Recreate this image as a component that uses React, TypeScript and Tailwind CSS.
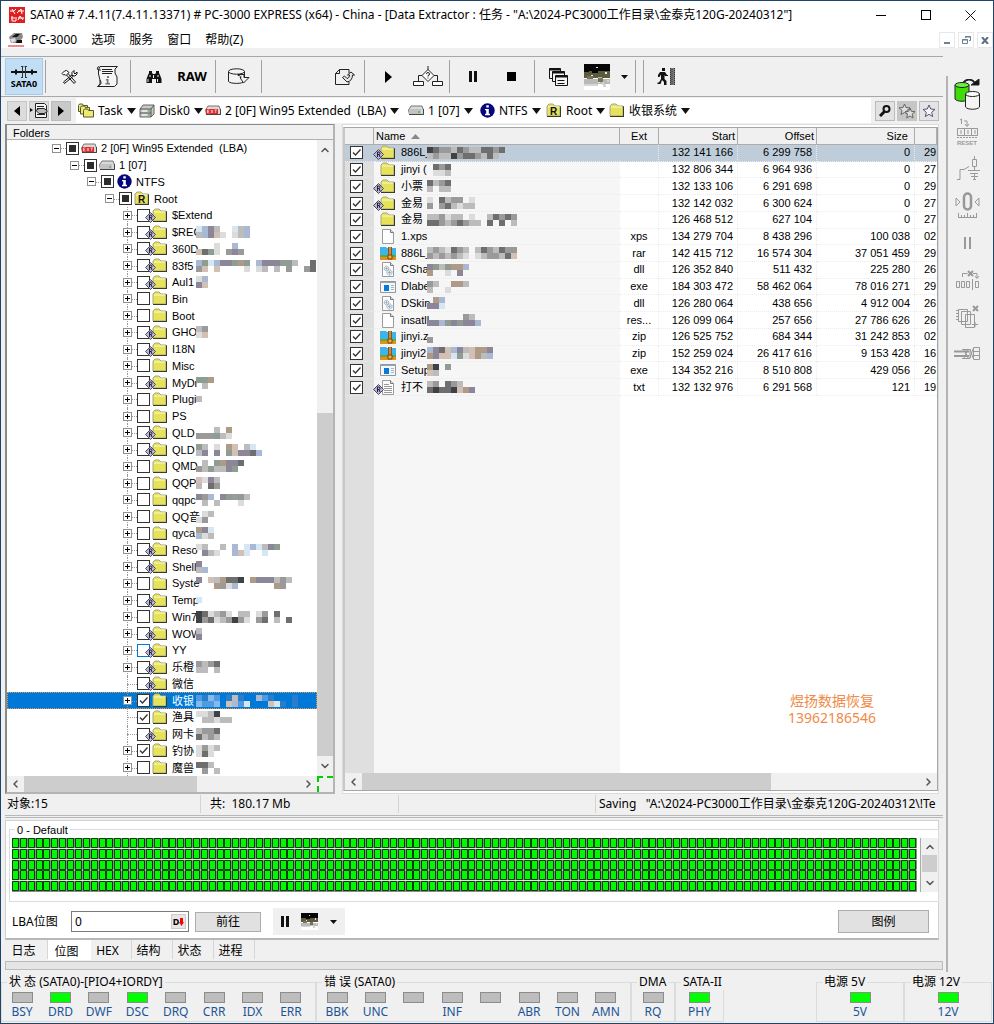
import React from "react";
import { ChevronDown, ChevronLeft, ChevronRight, ChevronUp } from "lucide-react";

const PALETTE: Record<string, string> = {
  a: "#dcdcdc", b: "#bcbcbc", c: "#9a9a9a", d: "#6e6e6e", e: "#3f4244",
  f: "#a9b9d3", g: "#d2c0b5", h: "#d6e6f2", i: "#8b8798", j: "#8f9c92",
  k: "#ae9b87", p: "#4f9be2", q: "#2a7dcc", r: "#86b9ec",
};

function Mosaic({ rows }: { rows: string[] }) {
  const cols = Math.max(...rows.map((r) => r.length));
  return (
    <svg width={cols * 6} height={rows.length * 6} shapeRendering="crispEdges" className="relative shrink-0" aria-hidden="true">
      {rows.flatMap((row, y) =>
        row.split("").map((ch, x) =>
          PALETTE[ch] ? <rect key={x + "-" + y} x={x * 6} y={y * 6} width="6" height="6" fill={PALETTE[ch]} /> : null,
        ),
      )}
    </svg>
  );
}

/* ---------- small icons ---------- */

function FolderIcon({ letter }: { letter?: string }) {
  return (
    <svg width="16" height="15" viewBox="0 0 16 15" className="shrink-0">
      <path d="M2 3h13v11H2z" fill="#222" />
      <path d="M1 3 3 1h4l2 2h5v10H1z" fill="#e6e25a" stroke="#a5a58c" />
      <path d="M2 4h11" stroke="#fbfbc8" />
      <path d="M1 13.5h14M14.5 4v10" stroke="#3b3b22" fill="none" />
      {letter && (
        <text x="4" y="12" fontSize="10" fontWeight="700" fontFamily="Liberation Sans, sans-serif" fill="#111">{letter}</text>
      )}
    </svg>
  );
}

function MarkBadge() {
  return (
    <svg width="11" height="11" viewBox="0 0 11 11" className="absolute top-1 -left-[7px]">
      <path d="M5.500.5 10.500 5.500 5.500 10.500.5 5.500z" fill="#b9b5dc" stroke="#4c4a66" />
      <path d="M4.500 8V3h1.500q1 .2 1 1.300T6 5.500H4.500M6 5.500 7 8" fill="none" stroke="#222" />
    </svg>
  );
}

function DriveIcon({ ext }: { ext?: boolean }) {
  return (
    <svg width="16" height="11" viewBox="0 0 16 11" className="shrink-0">
      <path d="M3 1h11l1.500 4v4.500h-14L.5 5z" fill="#d9d9d9" stroke="#777" />
      <path d="M1 4h12v5H1z" fill={ext ? "#e02a2a" : "#c2c2c2"} />
      <path d="M1 9.500h14.500V4" fill="none" stroke="#444" />
      {ext ? (
        <path d="M4.500 5H2.500v3h2M2.500 6.500h1.500M6 5l2 3M8 5 6 8M9.500 5h2.500M10.700 5v3" stroke="#fff" strokeWidth=".6" fill="none" />
      ) : (
        <path d="M10 7h2" stroke="#3a3" />
      )}
    </svg>
  );
}

function DiskIcon() {
  return (
    <svg width="16" height="14" viewBox="0 0 16 14" className="shrink-0">
      <path d="M4 1h11v9l-3 3H1V5z" fill="#c9c9c9" stroke="#666" />
      <path d="M1 5h11v8M12 5l3-4M1 9h11" fill="none" stroke="#555" />
      <path d="M3 7h5M3 11h5" stroke="#fff" />
      <path d="M9 7h2M9 11h2" stroke="#2b2" />
    </svg>
  );
}

function InfoIcon() {
  return (
    <svg width="15" height="15" viewBox="0 0 15 15" className="shrink-0">
      <circle cx="7.500" cy="7.500" r="7.200" fill="#05057c" />
      <path d="M6.300 2.300h2.500v2.200H6.300zM5 6h3.800v4.700H10v1.500H5v-1.500h1.200V7.300H5z" fill="#fff" />
    </svg>
  );
}

function StackFolders() {
  return (
    <svg width="16" height="15" viewBox="0 0 16 15" className="shrink-0" fill="#eeea70" stroke="#555533">
      <path d="M.5 8.500V2.500l1-1.500h3l1 1.500h4v6z" />
      <path d="M2.500 11V4.500l1-1.500h3l1 1.500h4V11z" />
      <path d="M5.500 14V7.500l1-1.500h3l1 1.500h5V14z" />
    </svg>
  );
}

function FileIcon({ kind }: { kind: string }) {
  if (kind === "zip")
    return (
      <svg width="16" height="14" viewBox="0 0 16 14" className="shrink-0">
        <path d="M0 1h6l1 1h9v9H0z" fill="#3fb4ec" />
        <path d="M0 9h16v2H0z" fill="#57b030" />
        <path d="M0 11h16v3H0z" fill="#ef8a1c" />
        <path d="M8 1h4v12H8z" fill="#8a5424" />
        <path d="M9 2h2M9 4h2M9 6h2M9 8h2" stroke="#f3ca60" />
        <path d="M8 9h4v4H8z" fill="#f6b32c" stroke="#6d4319" />
      </svg>
    );
  if (kind === "exe")
    return (
      <svg width="16" height="12" viewBox="0 0 16 12" className="shrink-0">
        <path d="M.5.5h15v11H.5z" fill="#f4f6f8" stroke="#8c99a5" />
        <path d="M1 1.500h14" stroke="#9aa7b3" />
        <path d="M4 4h5v6H4z" fill="#0a78d6" />
        <path d="M11 4.500h3M11 6.500h3M11 8.500h3" stroke="#9bb6cf" />
      </svg>
    );
  return (
    <svg width="16" height="15" viewBox="0 0 16 15" className="shrink-0">
      <path d="M2.500.5h8l3 3v11h-11z" fill="#fdfdfd" stroke="#9b9b9b" />
      <path d="M10.500.5v3h3" fill="#ddd" stroke="#777" />
      {kind === "txt" && <path d="M4 4.500h5M4 6.500h8M4 8.500h8M4 10.500h8M4 12.500h8" stroke="#999" />}
      {kind === "dll" && (
        <g fill="#e8eef3" stroke="#83929f">
          <circle cx="6.500" cy="6.500" r="2.300" strokeDasharray="1 .6" />
          <circle cx="9.500" cy="10.500" r="2.600" stroke="#6fa3c7" strokeDasharray="1.200 .6" />
          <circle cx="6.500" cy="6.500" r=".6" />
          <circle cx="9.500" cy="10.500" r=".7" />
        </g>
      )}
    </svg>
  );
}

function Landscape({ small }: { small?: boolean }) {
  return (
    <svg width={small ? 17 : 26} height={small ? 17 : 26} viewBox="0 0 26 26" shapeRendering="crispEdges">
      <path d="M0 0h26v26H0z" fill="#fff" />
      <path d="M0 0h26v7H0z" fill="#060606" />
      <path d="M0 7h26v7H0z" fill="#5c5a3c" />
      <path d="M0 6h5v2H0zM8 7h6v2H8z" fill="#060606" />
      <path d="M0 15h3v-1h6v1h5v-2h4v2h8v5H0z" fill="#b9b9b6" />
      <path d="M14 14h5v4h-5zM3 12h6v3H3z" fill="#77745a" />
      <path d="M0 20h14v2H0zM18 18h2v2h2v3h-3v-2h-1zM23 16h2v2h-2z" fill="#d6d6d6" />
      <path d="M12 3h2v1h-2zM21 8h2v2h-2zM7 11h2v1H7zM14 18h2v1h-2z" fill="#e8e8e8" />
    </svg>
  );
}

function Caret({ small }: { small?: boolean }) {
  return (
    <svg width={small ? 7 : 9} height={small ? 4 : 6} viewBox="0 0 9 6" preserveAspectRatio="none" className="shrink-0">
      <path d="M0 0h9L4.500 6z" fill="#111" />
    </svg>
  );
}

/* ---------- controls ---------- */

function Tick({ state, label, tone = "normal" }: { state: "off" | "on" | "mixed"; label: string; tone?: "normal" | "hot" }) {
  return (
    <span className="relative flex h-[13px] w-[13px] shrink-0">
      <input
        type="checkbox"
        aria-label={label}
        defaultChecked={state === "on"}
        className={"h-[13px] w-[13px] appearance-none border bg-white " + (tone === "hot" ? "border-[#0078d7]" : "border-[#333]")}
      />
      {state === "on" && (
        <svg width="13" height="13" viewBox="0 0 13 13" className="pointer-events-none absolute inset-0">
          <path d="M3 6.500 5.500 9l5-5.500" fill="none" stroke="#333" strokeWidth="1.300" />
        </svg>
      )}
      {state === "mixed" && <span className="pointer-events-none absolute inset-[3px] bg-[#2d2d2d]" />}
    </span>
  );
}

function Sep() {
  return <span className="mx-[2px] my-[3px] w-px shrink-0 bg-[#a0a0a0]" />;
}

function Tool({ label, className, children }: { label: string; className: string; children: React.ReactNode }) {
  return (
    <button type="button" aria-label={label} className={"flex shrink-0 items-center justify-center " + className}>
      {children}
    </button>
  );
}

function Toolbar() {
  return (
    <div className="flex h-[41px] shrink-0 border-y border-[#a8a8a8] pl-1">
      <Tool label="SATA0" className="my-[1px] w-[38px] flex-col border border-[#a3cdf0] bg-[#c2def5]">
        <svg width="28" height="14" viewBox="0 0 28 14" fill="none" stroke="#111">
          <path d="M1 7h26" strokeWidth="2" />
          <path d="M6 4.500v5M22 4.500v5" strokeWidth="2" />
          <path d="M12.500 2v10M15.500 2v10M11 1.500h2.500M14.500 1.500H17M11 12.500h2M15 12.500h2" stroke="#333" />
        </svg>
        <span className="text-[9px] leading-[10px] font-bold">SATA0</span>
      </Tool>
      <Sep />
      <Tool label="工具" className="w-[42px]">
        <svg width="17" height="16" viewBox="0 0 17 16" fill="none" stroke="#111">
          <path d="M5.500 6 13 14.500l1.500-1.500L7 4.500" />
          <path d="M1 4.500 3.500 2l2-.5L8 3.500 5 6.500 4 5.500 2.500 6z" fill="#fff" />
          <path d="M11.500 5.500 2.500 13l1 1.500L12.500 7" />
          <path d="M13 1.500 11 3.500v3l3 .5 2-2V3l-2 2-1-1z" fill="#fff" />
        </svg>
      </Tool>
      <Tool label="信息" className="w-[38px] pr-1">
        <svg width="23" height="23" viewBox="0 0 23 23" fill="none" stroke="#222">
          <path d="M4 1.500h17.500L19 4v4l2 4v7l-2.500 2.500H1.500L4 19v-4L2.500 9V5z" fill="#f5f5f5" />
          <path d="M3 1.500C1 2 1 4 2 5h3M4 15c2 3 1 5-2.500 6.500" />
          <path d="M6 4.500h10M6 6.500h11M6 8.500h10" />
          <path d="M11 11h2v2h-2zM10 14h2.500v4H14v1.500H9.500V18h1.300v-2.500H10z" fill="#777" stroke="none" />
        </svg>
      </Tool>
      <Sep />
      <Tool label="查找" className="w-[42px]">
        <svg width="16" height="14" viewBox="0 0 16 14" fill="#111">
          <path d="M3 1h3v2l1 1h2l1-1V1h3v2l1 2 1.500 4v4H10V9H6v4H.5V9L2 5l1-2z" />
          <path d="M2 9v3M4 5v2M11.500 9v3M12 5v2M7.500 5v3" stroke="#eee" fill="none" />
        </svg>
      </Tool>
      <Tool label="RAW" className="w-[38px] pr-1 text-[13px] font-bold">RAW</Tool>
      <Sep />
      <Tool label="导出" className="w-[41px]">
        <svg width="22" height="18" viewBox="0 0 22 18" fill="#f4f4f4" stroke="#222">
          <path d="M.5 3.500v10c2 2.500 14 2.500 16 0v-10" />
          <ellipse cx="8.500" cy="3.500" rx="8" ry="2.700" />
          <path d="M10 6.500h6v3h5L15.500 15 12 9.500h1C13 8 12 7.500 10 7.500z" />
        </svg>
      </Tool>
      <Sep />
      <span className="w-[63px]" />
      <Tool label="打开任务" className="w-[35px]">
        <svg width="20" height="18" viewBox="0 0 20 18" fill="none" stroke="#222">
          <path d="M14 5V1.500H4.500L.5 5.500v11H14V14M4.500 1.500v4h-4" />
          <path d="M7.500 9.500 9.500 8l2.500 2.500c2-.5 2.500-2 2.500-3.500h-2l3.500-3 3.500 3h-2c0 4-2 6.500-5.500 7z" fill="#e8e8e8" />
        </svg>
      </Tool>
      <Sep />
      <Tool label="开始" className="w-[42px]">
        <svg width="7" height="12" viewBox="0 0 7 12"><path d="M0 0v12l7-6z" fill="#000" /></svg>
      </Tool>
      <Tool label="流程" className="w-[38px]">
        <svg width="30" height="21" viewBox="0 0 30 21" fill="#fff" stroke="#222">
          <path d="M15 0v4M9.500 9.500H5.500V15M20.500 9.500h4V15" fill="none" />
          <path d="M15 3.500 21 9.500 15 15.500 9 9.500z" />
          <path d="M.5 15.500h10v4H.5zM19.500 15.500h10v4h-10z" />
          <path d="M13.500 8q0-1.500 1.500-1.500T16.500 8 15 9.500v1M15 11.500v1" fill="none" />
        </svg>
      </Tool>
      <Sep />
      <Tool label="暂停" className="w-[42px]">
        <svg width="8" height="11" viewBox="0 0 8 11"><path d="M0 0h3v11H0zM5 0h3v11H5z" fill="#111" /></svg>
      </Tool>
      <Tool label="停止" className="w-[38px] pr-1"><span className="h-[9px] w-[9px] bg-black" /></Tool>
      <Sep />
      <Tool label="窗口列表" className="w-[42px]">
        <svg width="19" height="20" viewBox="0 0 19 20" fill="#f4f4f4" stroke="#111">
          <path d="M.5 1.500h11v10H.5z" /><path d="M.5 2.500h11" strokeWidth="2" />
          <path d="M3.500 4.500h12v10h-12z" /><path d="M3.500 5.500h12" strokeWidth="2" />
          <path d="M6.500 8.500h12v10h-12z" /><path d="M6.500 9.500h12" strokeWidth="2" />
          <path d="M8.500 13.500h7M8.500 16.500h7" />
        </svg>
      </Tool>
      <Tool label="位图" className="w-9"><Landscape /></Tool>
      <Tool label="位图选项" className="w-[18px]"><Caret small /></Tool>
      <Sep />
      <span className="w-[3px]" />
      <Sep />
      <Tool label="退出" className="w-10">
        <svg width="19" height="18" viewBox="0 0 19 18" fill="#111">
          <path d="M5 0h3v3H5zM3 4h5l2 3h1v1H8L7.500 7v4l2 2v4H7v-3l-2-2-1.500 4H.5v-1.500h1.500L4 11V6.500L2.500 9H1V7z" />
          <path d="M13 0h5v17h-5z" fill="#777" />
          <path d="M13.500 0v17M15 1v16M17.500 0v17" stroke="#333" strokeDasharray="1 1" />
        </svg>
      </Tool>
    </div>
  );
}

const CRUMBS = [
  { text: "Task", icon: <StackFolders />, width: "min-w-[61px]" },
  { text: "Disk0", icon: <DiskIcon />, width: "min-w-[66px]" },
  { text: "2 [0F] Win95 Extended  (LBA)", icon: <DriveIcon ext />, width: "min-w-[203px]" },
  { text: "1 [07]", icon: <DriveIcon />, width: "min-w-[72px]" },
  { text: "NTFS", icon: <InfoIcon />, width: "min-w-[66px]" },
  { text: "Root", icon: <FolderIcon letter="R" />, width: "min-w-[63px]" },
  { text: "收银系统", icon: <FolderIcon />, width: "min-w-[83px]" },
];

function NavBar() {
  return (
    <div className="flex h-[27px] shrink-0 items-stretch py-px pl-[6px]">
      <div className="flex items-center gap-[2px] pr-[5px]">
        <button type="button" aria-label="后退" className="flex h-5 w-5 items-center justify-center border border-[#c4c4c4] bg-[#dcdcdc]">
          <svg width="6" height="10"><path d="M6 0v10L0 5z" /></svg>
        </button>
        <button type="button" aria-label="历史" className="flex h-5 w-5 items-center justify-center border border-[#c4c4c4] bg-[#dcdcdc]">
          <svg width="18" height="15" viewBox="0 0 18 15" fill="#f4f4f4" stroke="#222">
            <path d="M0 5v4l3-2z" fill="#111" stroke="none" />
            <path d="M5.500.5h9l2 2v12h-11z" />
            <path d="M7 3.500h7M7 5.500h2M7 11.500h8" />
            <path d="M6 7.500 9 5.500h5l3 2v1.500l-3 1.500H9z" fill="#bbb" />
          </svg>
        </button>
        <button type="button" aria-label="前进" className="flex h-5 w-5 items-center justify-center border border-[#bbb] bg-[#c9c9c9]">
          <svg width="6" height="10"><path d="M0 0v10l6-5z" /></svg>
        </button>
      </div>
      <nav className="flex min-w-0 flex-1 items-center bg-white pl-[2px] text-[12px] whitespace-pre">
        {CRUMBS.map((c) => (
          <button type="button" key={c.text} className={"flex items-center gap-1 " + c.width}>
            {c.icon}
            <span>{c.text}</span>
            <Caret />
          </button>
        ))}
      </nav>
      <div className="flex items-center gap-[2px] px-1">
        <button type="button" aria-label="搜索" className="flex h-5 w-5 items-center justify-center border border-[#bbb] bg-[#e2e2e2]">
          <svg width="12" height="12" fill="none" stroke="#111" strokeWidth="2"><circle cx="7.500" cy="4" r="3" /><path d="M5.500 6.500 1 11" strokeWidth="3" /></svg>
        </button>
        <button type="button" aria-label="收藏夹" className="flex h-5 w-5 items-center justify-center bg-[#c6c6c6]">
          <svg width="18" height="16" viewBox="0 0 18 16" fill="#ddd" stroke="#666">
            <path d="m6.500 1 1.500 3.500 4 .3L9 7.500l1 4-3.500-2-3.500 2 1-4-3-2.700 4-.3z" />
            <path d="m12 5 1.300 3.300 3.700.3-2.800 2.500.9 3.900-3.100-2-3.300 2 .9-3.900L7 8.600l3.700-.3z" />
          </svg>
        </button>
        <button type="button" aria-label="添加收藏" className="flex h-5 w-5 items-center justify-center border border-[#bbb] bg-[#e4e4e4]">
          <svg width="14" height="14" viewBox="0 0 14 14" fill="#f6f6fa" stroke="#555570"><path d="m7 1 1.700 4 4.300.4-3.300 2.900 1 4.300L7 10.300l-3.700 2.300 1-4.300L1 5.400 5.300 5z" /></svg>
        </button>
      </div>
    </div>
  );
}

/* ---------- folder tree ---------- */

type Leaf = { name: string; mark?: boolean; on?: boolean; noExp?: boolean; sel?: boolean; hot?: boolean; px?: string[] };

const LEAVES: Leaf[] = [
  { name: "$Extend", mark: true },
  { name: "$REC", mark: true, px: ["hfib..hbf", "bfiga.abf"] },
  { name: "360D", mark: true, px: ["...a..f", "gdja.cic"] },
  { name: "83f5", mark: true, px: ["fjhfiijkj.fiiijjb..d", "cg.g....a.ab.b.c..cd"] },
  { name: "Aul1", mark: true, px: ["af", "ig"] },
  { name: "Bin" },
  { name: "Boot" },
  { name: "GHO", mark: true, px: ["bc", "ag"] },
  { name: "I18N", mark: true },
  { name: "Misc" },
  { name: "MyDr", mark: true, px: ["jjk", ".b"] },
  { name: "Plugi", px: ["b"] },
  { name: "PS" },
  { name: "QLD", mark: true, px: ["...b.k", "cccjba"] },
  { name: "QLD", mark: true, px: ["jb.a.kg.bh", "bi.i.jgiidf"] },
  { name: "QMD", px: [".b.jkiid", "cbjbbij"] },
  { name: "QQP", px: ["gaib", "b.dc"] },
  { name: "qqpc", px: ["icf.ijcjb", ".b.b...a"] },
  { name: "QQ音", px: [".ab", "ac"] },
  { name: "qyca", px: ["kih", "fab"] },
  { name: "Reso", mark: true, px: ["ab..b.f.hfhbij", ".iba..fgh..h"] },
  { name: "Shell", mark: true, px: ["i", "bf"] },
  { name: "Syste", px: ["i.gbkdde.kiiibcb", "...kcaf......kc"] },
  { name: "Temp", mark: true, px: ["h"] },
  { name: "Win7", px: ["edabca.bb.ac.d..", "ecdabceca.cd.b.d"] },
  { name: "WOW", mark: true, px: ["b", "i"] },
  { name: "YY", mark: true, hot: true },
  { name: "乐橙", mark: true, px: ["cbcd", "bb.b"] },
  { name: "微信", mark: true, noExp: true },
  { name: "收银", on: true, sel: true, px: ["pqrp.qbq..fpq...q", "rppr.gfph...ghq.q."] },
  { name: "渔具", on: true, noExp: true, px: ["aabe", ".bbabb"] },
  { name: "网卡", mark: true, noExp: true, px: ["bccd", "dbcb"] },
  { name: "钓协", on: true, px: ["acab", "ada."] },
  { name: "魔兽", px: ["ddb", ".c.b"] },
];

function TreeRow({ indent, exp, state, label, icon, leaf }: {
  indent: string; exp?: "+" | "-"; state: "off" | "on" | "mixed"; label: string; icon: React.ReactNode; leaf?: Leaf;
}) {
  return (
    <li className={"flex min-h-0 flex-1 items-center " + indent + (leaf?.sel ? " bg-[#0078d7] text-white outline-1 -outline-offset-1 outline-dotted outline-[#e09a50]" : "")}>
      <span className="relative flex w-[14px] shrink-0 items-center self-stretch">
        {leaf && <span className="absolute inset-y-0 left-1 border-l border-dotted border-[#999]" />}
        <span className="absolute top-1/2 right-0 left-1 border-t border-dotted border-[#999]" />
        {exp && (
          <button type="button" aria-label={(exp === "+" ? "展开 " : "折叠 ") + label} className="relative flex h-[9px] w-[9px] items-center justify-center border border-[#919191] bg-white text-black">
            <svg width="5" height="5" shapeRendering="crispEdges"><path d={exp === "+" ? "M0 2h5v1H0zM2 0h1v5H2z" : "M0 2h5v1H0z"} /></svg>
          </button>
        )}
      </span>
      <Tick state={state} label={label} tone={leaf?.hot ? "hot" : "normal"} />
      <span className="relative ml-[2px] flex w-4 shrink-0 justify-center">
        {leaf?.mark && <MarkBadge />}
        {icon}
      </span>
      <span className={"ml-1 shrink-0 whitespace-pre " + (leaf?.px ? "w-6" : "")}>{label}</span>
      {leaf?.px && <Mosaic rows={leaf.px} />}
    </li>
  );
}

function FolderPanel() {
  return (
    <section className="ml-1 flex w-[330px] shrink-0 flex-col border-2 border-t border-[#8a8a8a] border-r-[#b4b4b4] border-b-[#b4b4b4] bg-white font-['Liberation_Sans','Noto_Sans_CJK_SC',sans-serif] text-[11px]">
      <h2 className="h-[15px] shrink-0 border-b border-[#b0b0b0] bg-[#f0f0f0] pl-[6px] leading-4">Folders</h2>
      <div className="flex min-h-0 flex-1">
        <ul className="flex min-w-0 flex-1 flex-col overflow-hidden leading-[14px]">
          <TreeRow indent="pl-[45px]" exp="-" state="mixed" label="2 [0F] Win95 Extended  (LBA)" icon={<DriveIcon ext />} />
          <TreeRow indent="pl-[63px]" exp="-" state="mixed" label="1 [07]" icon={<DriveIcon />} />
          <TreeRow indent="pl-[80px]" exp="-" state="mixed" label="NTFS" icon={<InfoIcon />} />
          <TreeRow indent="pl-[98px]" exp="-" state="mixed" label="Root" icon={<FolderIcon letter="R" />} />
          {LEAVES.map((l, i) => (
            <TreeRow key={i} indent="pl-[116px]" exp={l.noExp ? undefined : "+"} state={l.on ? "on" : "off"} label={l.name} icon={<FolderIcon />} leaf={l} />
          ))}
        </ul>
        <div className="flex w-4 shrink-0 flex-col items-center bg-[#f0f0f0]">
          <ChevronUp size={12} strokeWidth={3} className="h-5 shrink-0 text-[#555]" />
          <div className="flex-[253]" />
          <div className="w-full flex-[344] bg-[#cdcdcd]" />
          <ChevronDown size={12} strokeWidth={3} className="h-5 shrink-0 text-[#555]" />
        </div>
      </div>
      <div className="flex h-4 shrink-0">
        <div className="flex flex-1 items-center bg-[#f0f0f0]">
          <ChevronLeft size={12} strokeWidth={3} className="w-[17px] shrink-0 text-[#555]" />
          <div className="h-full flex-[173] bg-[#cdcdcd]" />
          <div className="flex-[103]" />
          <ChevronRight size={12} strokeWidth={3} className="w-[17px] shrink-0 text-[#555]" />
        </div>
        <div className="w-4 border-t-2 border-l-2 border-dashed border-[#00d000] bg-[#f0f0f0]" />
      </div>
    </section>
  );
}

/* ---------- file list ---------- */

type Row = { name: string; kind: string; mark?: boolean; ext: string; start: string; offset: string; size: string; last: string; px?: string[] };

const FILES: Row[] = [
  { name: "886L_", kind: "dir", mark: true, ext: "", start: "132 141 166", offset: "6 299 758", size: "0", last: "29", px: ["edccbdcbbddcd", "bcbbecddcbdb."] },
  { name: "jinyi (", kind: "dir", ext: "", start: "132 806 344", offset: "6 964 936", size: "0", last: "27", px: [".dcd", ".aab"] },
  { name: "小票", kind: "dir", mark: true, ext: "", start: "132 133 106", offset: "6 291 698", size: "0", last: "29", px: ["dbcd", "b.bb"] },
  { name: "金易", kind: "dir", mark: true, ext: "", start: "132 142 032", offset: "6 300 624", size: "0", last: "27", px: ["a.dbcc.a", "c.cdbabb"] },
  { name: "金易", kind: "dir", ext: "", start: "126 468 512", offset: "627 104", size: "0", last: "27", px: ["bbcabb.a..bdcdc", "ddcbcdcbb.d.d.b"] },
  { name: "1.xps", kind: "file", ext: "xps", start: "134 279 704", offset: "8 438 296", size: "100 038", last: "02" },
  { name: "886L_", kind: "zip", ext: "rar", start: "142 415 712", offset: "16 574 304", size: "37 051 459", last: "29", px: ["bcbadcb.bdcbdcc", "cbcbcba.abccbdg"] },
  { name: "CSha", kind: "dll", ext: "dll", start: "126 352 840", offset: "511 432", size: "225 280", last: "26", px: ["ijbjkkf", "k..a.i."] },
  { name: "Dlabe", kind: "exe", ext: "exe", start: "184 303 472", offset: "58 462 064", size: "78 016 271", last: "29", px: ["cb..kkb", "b..a..."] },
  { name: "DSkin", kind: "dll", ext: "dll", start: "126 280 064", offset: "438 656", size: "4 912 004", last: "26", px: [".kf", "iih"] },
  { name: "insatll", kind: "file", ext: "res...", start: "126 099 064", offset: "257 656", size: "27 786 626", last: "26", px: ["......cb.", "iifjijiif"] },
  { name: "jinyi.z", kind: "zip", ext: "zip", start: "126 525 752", offset: "684 344", size: "31 242 853", last: "02", px: [".", "c"] },
  { name: "jinyi2", kind: "zip", ext: "zip", start: "152 259 024", offset: "26 417 616", size: "9 153 428", last: "16", px: ["fidgfibgkki", "kigghjagkbf"] },
  { name: "Setup", kind: "exe", ext: "exe", start: "134 352 216", offset: "8 510 808", size: "429 056", last: "26", px: ["ke.j", "gb"] },
  { name: "打不", kind: "txt", mark: true, ext: "txt", start: "132 132 976", offset: "6 291 568", size: "121", last: "19", px: ["bc.dcb.", "deddegki"] },
];

function FilePanel() {
  return (
    <section className="relative flex min-w-0 flex-1 flex-col border border-[#dcdcdc] bg-white pt-[2px] pb-[2px] font-['Liberation_Sans','Noto_Sans_CJK_SC',sans-serif] text-[11px]">
      <div className="flex min-h-0 flex-1 flex-col overflow-hidden border border-l-2 border-[#a6a6a6] border-l-[#c8c8c8]">
        <table className="h-[268px] w-full table-fixed border-separate border-spacing-0 leading-[15px]">
          <colgroup>
            <col className="w-[29px]" /><col className="w-[246px]" /><col className="w-[39px]" /><col className="w-[79px]" />
            <col className="w-[79px]" /><col className="w-[98px]" /><col />
          </colgroup>
          <thead>
            <tr className="h-[17px] bg-[#f0f0f0] [&>th]:border-r [&>th]:border-b [&>th]:border-[#adadad] [&>th]:p-0 [&>th]:font-normal">
              <th aria-label="选择" />
              <th className="text-left">
                <span className="flex items-center gap-[6px] pl-[2px]">Name<svg width="9" height="5"><path d="M4.500 0 9 5H0z" fill="#888" /></svg></span>
              </th>
              <th>Ext</th>
              <th className="text-right"><span className="pr-[2px]">Start</span></th>
              <th className="text-right"><span className="pr-[2px]">Offset</span></th>
              <th className="text-right"><span className="pr-[6px]">Size</span></th>
              <th aria-label="日期" />
            </tr>
          </thead>
          <tbody>
            {FILES.map((f, i) => (
              <tr key={i} className={"[&>td]:border-b [&>td]:border-dotted [&>td]:border-[#ececec] [&>td]:p-0 " + (i === 0 ? "bg-[#bfcddb]" : "")}>
                <td className={i === 0 ? "" : "bg-[#dfdfdf]"}><span className="flex pl-[5px]"><Tick state="on" label={f.name} /></span></td>
                <td className={i === 0 ? "" : "bg-[#f6f6f6]"}>
                  <span className="flex h-[15px] items-center pl-[6px]">
                    <span className="relative flex w-4 shrink-0">
                      {f.mark && <MarkBadge />}
                      {f.kind === "dir" ? <FolderIcon /> : <FileIcon kind={f.kind} />}
                    </span>
                    <span className="ml-[5px] w-[26px] shrink-0 whitespace-nowrap">{f.name}</span>
                    {f.px && <Mosaic rows={f.px} />}
                  </span>
                </td>
                <td className="border-r text-center">{f.ext}</td>
                <td className="border-r text-right"><span className="pr-1">{f.start}</span></td>
                <td className="border-r text-right"><span className="pr-1">{f.offset}</span></td>
                <td className="border-r text-right"><span className="pr-1">{f.size}</span></td>
                <td><span className="pl-[9px]">{f.last}</span></td>
              </tr>
            ))}
          </tbody>
        </table>
        <div className="flex flex-1">
          <div className="w-[29px] bg-[#dfdfdf]" />
          <div className="w-[246px] bg-[#f6f6f6]" />
        </div>
        <div className="flex h-[17px] shrink-0 items-center bg-[#f0f0f0]">
          <ChevronLeft size={12} strokeWidth={3} className="w-[17px] shrink-0 text-[#555]" />
          <div className="h-full flex-[410] bg-[#cdcdcd]" />
          <div className="flex-[149]" />
          <ChevronRight size={12} strokeWidth={3} className="w-[17px] shrink-0 text-[#555]" />
        </div>
      </div>
      <p className="pointer-events-none absolute right-[62px] bottom-[67px] text-center font-['Noto_Sans','Noto_Sans_CJK_SC',sans-serif] text-[14px] leading-[17px] text-[#f08a48]">
        煜扬数据恢复<br />13962186546
      </p>
    </section>
  );
}

/* ---------- bottom area ---------- */

function BitmapGrid() {
  const cells: React.ReactNode[] = [];
  for (let r = 0; r < 5; r++)
    for (let c = 0; c < 115; c++) {
      const x = Math.round(c * 7.87);
      const y = Math.round(r * 10.8);
      cells.push(<path key={r + "-" + c} d={`M${x + 0.5} ${y + 0.5}h6v9h-6z`} />);
    }
  return (
    <svg viewBox="0 0 905 54" preserveAspectRatio="none" className="h-[54px] min-w-0 flex-1" role="img" aria-label="LBA 位图">
      <path d="M0 0h905v54H0z" fill="#8a8a8a" />
      <path d="M0 10.500h905M0 21.500h905M0 32h905M0 42.500h905" stroke="#e4e4e4" />
      <g fill="#00f800" stroke="#0b3a0b">{cells}</g>
    </svg>
  );
}

const TABS = ["日志", "位图", "HEX", "结构", "状态", "进程"];

function BitmapPanel() {
  return (
    <section className="mr-1 ml-1 flex h-[120px] shrink-0 flex-col border border-b-2 border-[#d0d0d0] border-b-[#b8b8b8] bg-white">
      <fieldset className="relative mx-[3px] mt-[8px] flex h-[73px] border border-[#dcdcdc] pt-[8px] pl-[2px]">
        <legend className="absolute -top-[8px] left-[5px] bg-white px-[2px] font-['Liberation_Sans',sans-serif] text-[11px] leading-4">0 - Default</legend>
        <BitmapGrid />
        <div className="ml-[3px] flex w-[18px] flex-col items-center border-l border-[#aaa] bg-[#f0f0f0]">
          <ChevronUp size={12} strokeWidth={3} className="mt-px h-4 shrink-0 text-[#555]" />
          <div className="h-[17px] w-[15px] bg-[#cdcdcd]" />
          <div className="flex-1" />
          <ChevronDown size={12} strokeWidth={3} className="h-[18px] shrink-0 text-[#555]" />
        </div>
      </fieldset>
      <div className="flex flex-1 items-center pt-[3px] pr-[9px] pl-[6px] text-[12px]">
        <label htmlFor="lba" className="w-[59px]">LBA位图</label>
        <span className="flex h-[21px] w-[118px] items-center border border-[#7a7a7a] bg-white pr-[2px]">
          <input id="lba" defaultValue="0" className="min-w-0 flex-1 pl-[3px] outline-none" />
          <button type="button" aria-label="十进制" className="flex h-[15px] w-[15px] items-center justify-center border border-[#ccc] bg-[#e6e6e6] text-[9px] font-bold">
            D
            <svg width="5" height="8"><path d="M1 0h3v4h1L2.500 8 0 4h1z" fill="#f00" /></svg>
          </button>
        </span>
        <button type="button" className="ml-[6px] h-5 w-[66px] border border-[#adadad] bg-[#e1e1e1] leading-4">前往</button>
        <div className="ml-3 flex h-[27px] w-[72px] items-center justify-between bg-[#f0f0f0] px-2">
          <button type="button" aria-label="暂停"><svg width="8" height="11"><path d="M0 0h3v11H0zM5 0h3v11H5z" fill="#111" /></svg></button>
          <button type="button" aria-label="位图"><Landscape small /></button>
          <button type="button" aria-label="更多"><Caret small /></button>
        </div>
        <button type="button" className="ml-auto h-[23px] w-[91px] border border-[#adadad] bg-[#e1e1e1] leading-4">图例</button>
      </div>
    </section>
  );
}

function Led({ on, label }: { on?: boolean; label: string }) {
  return (
    <div className="flex w-[38px] flex-col items-center">
      <span className={"h-[11px] w-[21px] border border-[#8c8c8c] " + (on ? "bg-[#00ff00]" : "bg-[#bdbdbd]")} />
      <span className="mt-px h-4 text-[12px] leading-4 text-[#1a5596]">{label}</span>
    </div>
  );
}

function LedGroup({ title, leds, on, className }: { title: string; leds: string[]; on: string[]; className: string }) {
  return (
    <fieldset className={"relative mt-[10px] flex h-[40px] shrink-0 border border-[#dcdcdc] pt-[9px] " + className}>
      <legend className="absolute -top-[9px] left-[5px] bg-[#f0f0f0] px-[2px] text-[12px] leading-4 whitespace-pre">{title}</legend>
      {leds.map((l, i) => <Led key={i} label={l} on={on.includes(l)} />)}
    </fieldset>
  );
}

function SideTools() {
  return (
    <aside className="flex w-[50px] shrink-0 flex-col pt-7">
      <div className="ml-[3px] flex flex-1 flex-col items-center border-l-2 border-[#b4b4b4] pr-[6px] [&>button]:flex [&>button]:h-[37px] [&>button]:items-center">
        <button type="button" aria-label="数据库同步">
          <svg width="27" height="32" viewBox="0 0 27 32" stroke="#222">
            <path d="M9 4c4-5 9-4 12 0" fill="none" strokeWidth="2" />
            <path d="M17 6h8V0z" fill="#111" />
            <path d="M1 6v14c2 3 12 3 14 0V6" fill="#3fdc0c" /><ellipse cx="8" cy="6" rx="7" ry="2.500" fill="#6df03a" />
            <path d="M11.500 15v13c2 3 12 3 14 0V15" fill="#f4f4f4" /><ellipse cx="18.500" cy="15" rx="7" ry="2.500" fill="#fff" />
          </svg>
        </button>
        <button type="button" aria-label="RESET">
          <svg width="22" height="27" viewBox="0 0 22 27" fill="none" stroke="#999">
            <path d="M3 2l1.500-1v5M7 3h3v5M8 6l2 2.500L12 6" />
            <path d="M.5 10.500h20v7H.5zM0 19.500h21" strokeDasharray="2 1" />
            <path d="M.5 10.500h20v7H.5zM7.500 10v8M14.500 10v8M4 12v4M11 12v4M18 12v4" />
            <text x="0" y="27" fontSize="6" fontWeight="700" stroke="none" fill="#999" fontFamily="Liberation Sans, sans-serif">RESET</text>
          </svg>
        </button>
        <button type="button" aria-label="电源开关">
          <svg width="24" height="25" viewBox="0 0 24 25" fill="none" stroke="#999">
            <path d="M1 23.500h3V13.500h4l5-3M18.500 0v3M16.500 3.500h4v7h-4zM18.500 10v4M12 14.500h12M14 17.500h8M18.500 17v6M15 20.500h7M17 23.500h3" />
          </svg>
        </button>
        <button type="button" aria-label="归零">
          <svg width="25" height="27" viewBox="0 0 25 27" fill="none" stroke="#999">
            <path d="M1 6v8l4-4zM24 6v8l-4-4z" /><rect x="9" y="1.500" width="7" height="16" rx="3.500" strokeWidth="2.500" />
            <path d="M3 25.500h19M3.500 21v4M6.500 23v2M9.500 23v2M12.500 21v4M15.500 23v2M18.500 23v2M21.500 21v4" />
          </svg>
        </button>
        <button type="button" aria-label="暂停"><svg width="8" height="12"><path d="M0 0h2v12H0zM5 0h2v12H5z" fill="#999" /></svg></button>
        <button type="button" aria-label="跳过">
          <svg width="24" height="20" viewBox="0 0 24 20" fill="none" stroke="#999">
            <path d="M6.500 7V3.500h5M17 3.500h4V8M19 6l2 2.500L23 6" /><path d="M12 1l5 5M17 1l-5 5" strokeWidth="2" />
            <path d="M.5 11.500h3v6h-3zM5.500 11.500h3v6h-3zM10.500 11.500h3v6h-3zM19.500 11.500h3v6h-3zM16.500 9v11" />
          </svg>
        </button>
        <button type="button" aria-label="复制">
          <svg width="24" height="24" viewBox="0 0 24 24" fill="#f0f0f0" stroke="#999">
            <path d="M2.500 4.500h9v12h-9zM5.500 6.500h9v13h-9zM9.500 9.500h9v13h-9z" /><path d="M0 5.500h2M0 8.500h2M0 11.500h2M0 14.500h2" />
            <path d="M17 1l5 5M22 1l-5 5" strokeWidth="2" /><path d="M16 19.500h6M19 17v5" />
          </svg>
        </button>
        <button type="button" aria-label="芯片">
          <svg width="27" height="15" viewBox="0 0 27 15" fill="none" stroke="#999">
            <path d="M0 5.500h15M0 10h15" strokeWidth="2" /><path d="M8 3.500h8v9H8M16 3l3 9M19 3l-3 9M10 3l4 9M14 3l-4 9M19.500 1.500h6v12h-6zM19 5.500h7M19 9.500h7" />
          </svg>
        </button>
      </div>
    </aside>
  );
}

export default function App() {
  return (
    <div className="flex h-screen flex-col overflow-hidden border border-[#1f4468] bg-[#f0f0f0] font-['Noto_Sans','Noto_Sans_CJK_SC',sans-serif] text-[12px] text-black">
      <header className="flex h-7 shrink-0 items-center bg-white pl-2">
        <svg width="16" height="16" viewBox="0 0 16 16" className="shrink-0">
          <path d="M0 0h16v16H0z" fill="#e02020" />
          <path d="M1 4h4l2-2M3 2l3 5M8 6l4-4 1 5M9 4h6M2 11h4M3 9v5h4v-4M9 13l2-4 3 4M9 11h6" stroke="#fff" fill="none" />
        </svg>
        <h1 className="ml-[5px] flex-1 text-[12px] leading-4 whitespace-nowrap">SATA0 # 7.4.11(7.4.11.13371) # PC-3000 EXPRESS (x64) - China - [Data Extractor : 任务 - "A:\2024-PC3000工作目录\金泰克120G-20240312"]</h1>
        <button type="button" aria-label="最小化" className="flex w-[45px] justify-center"><span className="h-px w-[10px] bg-black" /></button>
        <button type="button" aria-label="最大化" className="flex w-[45px] justify-center"><span className="h-[10px] w-[10px] border border-black" /></button>
        <button type="button" aria-label="关闭" className="flex w-[45px] justify-center">
          <svg width="11" height="11" stroke="#111"><path d="M.5.5l10 10M10.500.5l-10 10" /></svg>
        </button>
      </header>
      <div className="flex h-[19px] shrink-0 items-center bg-white pt-[3px] pl-[7px]">
        <svg width="16" height="16" viewBox="0 0 16 16" className="shrink-0">
          <path d="M1 5l5-4h8l1 4-4 6H3z" fill="#888" />
          <path d="M4 5l4-3h4l-3 3zM9 8h5v3H8z" fill="#111" />
          <path d="M2 7l5-1 1 3-4 2z" fill="#ddd" />
          <path d="M0 14h16" stroke="#e01818" />
        </svg>
        <nav className="ml-[7px] flex flex-1 gap-[14px] leading-4">
          {["PC-3000", "选项", "服务", "窗口", "帮助(Z)"].map((m) => <button type="button" key={m}>{m}</button>)}
        </nav>
        <div className="flex gap-[3px] [&>button]:flex [&>button]:h-4 [&>button]:w-4 [&>button]:items-center [&>button]:justify-center [&>button]:border [&>button]:border-[#e8e8e8]">
          <button type="button" aria-label="最小化子窗口"><svg width="7" height="7"><path d="M0 6h6" stroke="#6d7f92" strokeWidth="2" /></svg></button>
          <button type="button" aria-label="还原子窗口"><svg width="9" height="8" fill="none" stroke="#6d7f92"><path d="M3.500 2V.5h5v4H7M3 1h6M.5 3.500h5v4h-5zM0 4h6" /></svg></button>
          <button type="button" aria-label="关闭子窗口"><svg width="8" height="7" stroke="#5d6f82" strokeWidth="2"><path d="M1 0l6 7M7 0 1 7" /></svg></button>
        </div>
      </div>

      <div className="flex min-h-0 flex-1">
        <main className="flex min-w-0 flex-1 flex-col pt-2">
          <Toolbar />
          <NavBar />
          <div className="flex min-h-0 flex-1">
            <FolderPanel />
            <div className="w-[7px] shrink-0" />
            <FilePanel />
            <div className="w-1 shrink-0" />
          </div>
          <div className="flex h-5 shrink-0 items-center overflow-hidden pl-[6px] whitespace-pre">
            <span className="w-[193px] shrink-0">对象:15</span>
            <span className="w-[198px] shrink-0 border-l border-[#d4d4d4] pl-[9px]">共:  180.17 Mb</span>
            <span className="w-[197px] shrink-0 border-l border-[#d4d4d4]">&nbsp;</span>
            <span className="min-w-0 flex-1 border-l border-[#d4d4d4] pl-[3px]">Saving   "A:\2024-PC3000工作目录\金泰克120G-20240312\!Te</span>
          </div>
          <div className="mt-px mb-[2px] ml-1 h-[3px] shrink-0 border-y border-[#b8b8b8]" />
          <BitmapPanel />
          <div role="tablist" className="ml-[6px] flex h-[21px] shrink-0 items-start">
            {TABS.map((t) => (
              <button
                type="button"
                role="tab"
                aria-selected={t === "位图"}
                key={t}
                className={t === "位图" ? "h-5 w-[43px] bg-white pt-1 pr-[6px] leading-4" : "h-[19px] w-[41px] border-r border-[#d6d6d6] pt-[2px] pr-[7px] leading-4"}
              >
                {t}
              </button>
            ))}
          </div>
          <div className="mb-[2px] ml-1 h-[9px] shrink-0 border border-[#bcbcbc] bg-[#e5e5e5]" />
        </main>
        <SideTools />
      </div>

      <footer className="flex h-[51px] shrink-0 overflow-hidden pr-px">
        <LedGroup title="状 态 (SATA0)-[PIO4+IORDY]" leds={["BSY", "DRD", "DWF", "DSC", "DRQ", "CRR", "IDX", "ERR"]} on={["DRD", "DSC"]} className="w-[315px] justify-between pr-[5px] pl-px" />
        <LedGroup title="错 误 (SATA0)" leds={["BBK", "UNC", "", "INF", "", "ABR", "TON", "AMN"]} on={[]} className="w-[315px] justify-between pr-[5px] pl-px" />
        <LedGroup title="DMA" leds={["RQ"]} on={[]} className="w-[44px] justify-center" />
        <LedGroup title="SATA-II" leds={["PHY"]} on={["PHY"]} className="w-[49px] justify-center" />
        <div className="flex-1" />
        <LedGroup title="电源 5V" leds={["5V"]} on={["5V"]} className="w-[88px] justify-center" />
        <LedGroup title="电源 12V" leds={["12V"]} on={["12V"]} className="w-[88px] justify-center" />
      </footer>
    </div>
  );
}
